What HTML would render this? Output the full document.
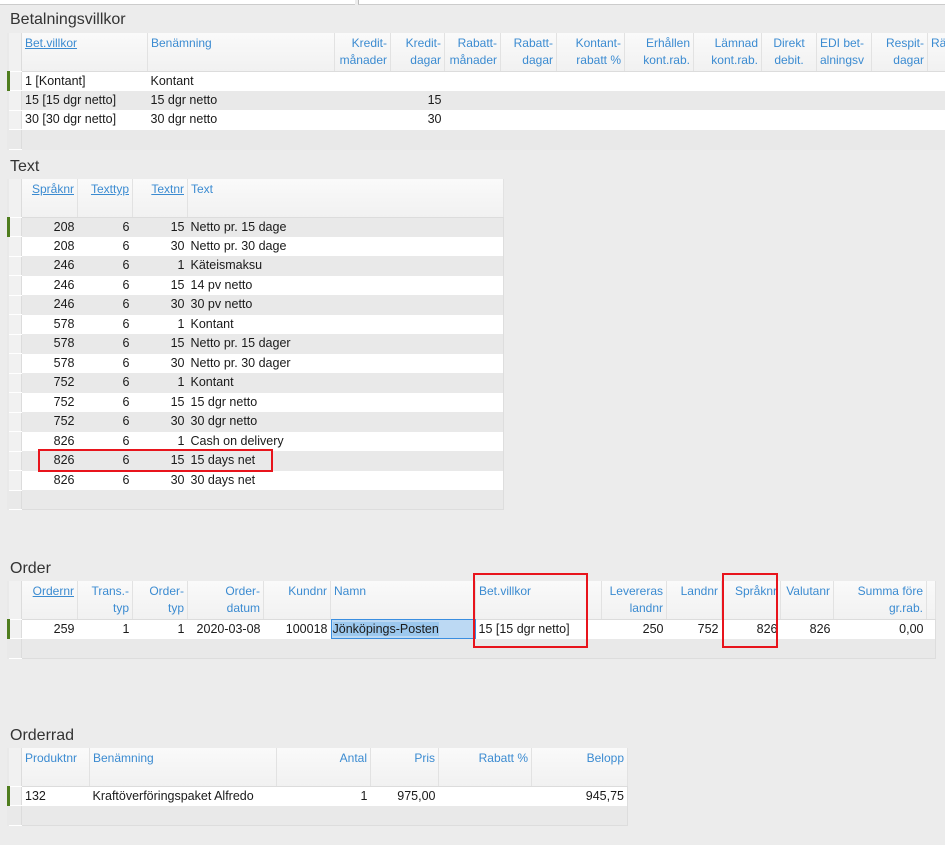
<!DOCTYPE html>
<html><head><meta charset="utf-8">
<style>
*{margin:0;padding:0;box-sizing:border-box}
body{width:945px;height:845px;background:#ececec;font-family:"Liberation Sans",sans-serif;font-size:12.5px;color:#1a1a1a;position:relative;overflow:hidden}
.title{position:absolute;font-size:16px;color:#333}
table{position:absolute;border-collapse:collapse;table-layout:fixed;background:#e9e9e9}
td,th{overflow:hidden;white-space:nowrap;padding:0 3px;height:19.5px;font-weight:normal}
th{background:linear-gradient(#fafafa,#f1f1f1);color:#3b8bd1;vertical-align:top;text-align:right;border-right:1px solid #e2e2e2;border-bottom:1px solid #dcdcdc;line-height:16.5px;padding-top:2px;font-size:12px}
th.l{text-align:left}
th u{text-decoration:underline}
td{text-align:right;line-height:19px}
td.l{text-align:left}
td.s,th.s{width:13px;padding:0;background:#f1f1f1;border-right:1px solid #dcdcdc;border-bottom:1px solid #fff}
td.sel{border-left:3px solid #4f7d1e}
tr.w td{background:#fff}
tr.g td{background:#e9e9e9}
tr td.s{background:#f1f1f1}
tr.e td{background:#e9e9e9}
.red{position:absolute;border:2px solid #e8141c}
</style></head><body>
<div style="position:absolute;left:0;top:0;width:355px;height:5px;background:#fff;border-bottom:1px solid #ccc"></div>
<div style="position:absolute;left:358px;top:0;width:587px;height:5px;background:#fff;border-bottom:1px solid #ccc;border-left:1px solid #bbb"></div>

<div class="title" style="left:10px;top:11px">Betalningsvillkor</div>
<table style="left:7px;top:33px;width:945px">
<colgroup><col style="width:13px"><col style="width:126px"><col style="width:187px"><col style="width:56px"><col style="width:54px"><col style="width:56px"><col style="width:56px"><col style="width:68px"><col style="width:69px"><col style="width:68px"><col style="width:55px"><col style="width:55px"><col style="width:56px"><col style="width:26px"></colgroup>
<tr style="height:38px"><th class="s"></th><th class="l"><u>Bet.villkor</u></th><th class="l">Benämning</th><th>Kredit-<br>månader</th><th>Kredit-<br>dagar</th><th>Rabatt-<br>månader</th><th>Rabatt-<br>dagar</th><th>Kontant-<br>rabatt %</th><th>Erhållen<br>kont.rab.</th><th>Lämnad<br>kont.rab.</th><th style="text-align:center">Direkt<br>debit.</th><th class="l">EDI bet-<br>alningsv</th><th>Respit-<br>dagar</th><th class="l">Rän</th></tr>
<tr class="w"><td class="s sel"></td><td class="l">1 [Kontant]</td><td class="l">Kontant</td><td></td><td></td><td></td><td></td><td></td><td></td><td></td><td></td><td></td><td></td><td></td></tr>
<tr class="g"><td class="s"></td><td class="l">15 [15 dgr netto]</td><td class="l">15 dgr netto</td><td></td><td>15</td><td></td><td></td><td></td><td></td><td></td><td></td><td></td><td></td><td></td></tr>
<tr class="w"><td class="s"></td><td class="l">30 [30 dgr netto]</td><td class="l">30 dgr netto</td><td></td><td>30</td><td></td><td></td><td></td><td></td><td></td><td></td><td></td><td></td><td></td></tr>
<tr class="e"><td class="s"></td><td colspan="13"></td></tr>
</table>

<div class="title" style="left:10px;top:158px">Text</div>
<table style="left:7px;top:179px;width:495px;border-right:1px solid #ddd;border-bottom:1px solid #ddd">
<colgroup><col style="width:13px"><col style="width:56px"><col style="width:55px"><col style="width:55px"><col style="width:316px"></colgroup>
<tr style="height:38px"><th class="s"></th><th><u>Språknr</u></th><th><u>Texttyp</u></th><th><u>Textnr</u></th><th class="l">Text</th></tr>
<tr class="g"><td class="s sel"></td><td>208</td><td>6</td><td>15</td><td class="l">Netto pr. 15 dage</td></tr>
<tr class="w"><td class="s"></td><td>208</td><td>6</td><td>30</td><td class="l">Netto pr. 30 dage</td></tr>
<tr class="g"><td class="s"></td><td>246</td><td>6</td><td>1</td><td class="l">Käteismaksu</td></tr>
<tr class="w"><td class="s"></td><td>246</td><td>6</td><td>15</td><td class="l">14 pv netto</td></tr>
<tr class="g"><td class="s"></td><td>246</td><td>6</td><td>30</td><td class="l">30 pv netto</td></tr>
<tr class="w"><td class="s"></td><td>578</td><td>6</td><td>1</td><td class="l">Kontant</td></tr>
<tr class="g"><td class="s"></td><td>578</td><td>6</td><td>15</td><td class="l">Netto pr. 15 dager</td></tr>
<tr class="w"><td class="s"></td><td>578</td><td>6</td><td>30</td><td class="l">Netto pr. 30 dager</td></tr>
<tr class="g"><td class="s"></td><td>752</td><td>6</td><td>1</td><td class="l">Kontant</td></tr>
<tr class="w"><td class="s"></td><td>752</td><td>6</td><td>15</td><td class="l">15 dgr netto</td></tr>
<tr class="g"><td class="s"></td><td>752</td><td>6</td><td>30</td><td class="l">30 dgr netto</td></tr>
<tr class="w"><td class="s"></td><td>826</td><td>6</td><td>1</td><td class="l">Cash on delivery</td></tr>
<tr class="g"><td class="s"></td><td>826</td><td>6</td><td>15</td><td class="l">15 days net</td></tr>
<tr class="w"><td class="s"></td><td>826</td><td>6</td><td>30</td><td class="l">30 days net</td></tr>
<tr class="e"><td class="s"></td><td colspan="4"></td></tr>
</table>
<div class="red" style="left:38px;top:449px;width:235px;height:23px"></div>

<div class="title" style="left:10px;top:560px">Order</div>
<table style="left:7px;top:581px;width:927px;border-right:1px solid #ddd;border-bottom:1px solid #ddd">
<colgroup><col style="width:13px"><col style="width:56px"><col style="width:55px"><col style="width:55px"><col style="width:76px"><col style="width:67px"><col style="width:145px"><col style="width:126px"><col style="width:65px"><col style="width:55px"><col style="width:59px"><col style="width:53px"><col style="width:93px"><col style="width:9px"></colgroup>
<tr style="height:38px"><th class="s"></th><th><u>Ordernr</u></th><th>Trans.-<br>typ</th><th>Order-<br>typ</th><th>Order-<br>datum</th><th>Kundnr</th><th class="l">Namn</th><th class="l">Bet.villkor</th><th>Levereras<br>landnr</th><th>Landnr</th><th>Språknr</th><th>Valutanr</th><th>Summa före<br>gr.rab.</th><th></th></tr>
<tr class="w"><td class="s sel"></td><td>259</td><td>1</td><td>1</td><td>2020-03-08</td><td>100018</td><td class="l" style="background:#bcd9f3;outline:1px solid #3a8ee0;outline-offset:-1px;padding-left:2px"><span style="background:#9cc8ee">Jönköpings-Posten</span></td><td class="l">15 [15 dgr netto]</td><td>250</td><td>752</td><td>826</td><td>826</td><td>0,00</td><td></td></tr>
<tr class="e"><td class="s"></td><td colspan="13"></td></tr>
</table>
<div class="red" style="left:473px;top:573px;width:115px;height:75px"></div>
<div class="red" style="left:722px;top:573px;width:56px;height:75px"></div>

<div class="title" style="left:10px;top:727px">Orderrad</div>
<table style="left:7px;top:748px;width:619px;border-right:1px solid #ddd;border-bottom:1px solid #ddd">
<colgroup><col style="width:13px"><col style="width:68px"><col style="width:187px"><col style="width:94px"><col style="width:68px"><col style="width:93px"><col style="width:96px"></colgroup>
<tr style="height:38px"><th class="s"></th><th class="l">Produktnr</th><th class="l">Benämning</th><th>Antal</th><th>Pris</th><th>Rabatt %</th><th>Belopp</th></tr>
<tr class="w"><td class="s sel"></td><td class="l">132</td><td class="l">Kraftöverföringspaket Alfredo</td><td>1</td><td>975,00</td><td></td><td>945,75</td></tr>
<tr class="e"><td class="s"></td><td colspan="6"></td></tr>
</table>
</body></html>
